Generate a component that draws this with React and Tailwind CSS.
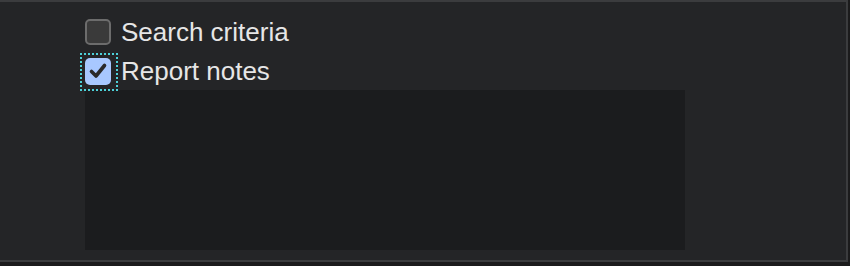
export default function App() {
  return (
    <div className="w-[850px] h-[266px] bg-[#1b1b1c] overflow-hidden" style={{ fontFamily: '"Liberation Sans", Arial, sans-serif' }}>
      <div className="w-[848px] h-[262px] bg-[#242527] border-t-2 border-r-2 border-b-2 border-[#3b3c3e] pl-[85px] pt-[15px]">
        <div className="flex items-center h-[30px] gap-[10px]">
          <div className="w-[26px] h-[26px] rounded-[5px] border-2 border-[#6c6c6c] bg-[#3a3a3a]"></div>
          <span className="text-[26px] leading-none text-[#e6e6e6]">Search criteria</span>
        </div>
        <div className="flex items-center h-[38px] gap-[10px] mt-[5px]">
          <div className="relative w-[26px] h-[27px]">
            <div className="absolute -left-[5px] -top-[5px] w-[38px] h-[38px] border-2 border-dotted border-[#4dd0d8]"></div>
            <div className="w-[26px] h-[27px] rounded-[5px] bg-[#a8c8ff] flex items-center justify-center">
              <svg width="20" height="18" viewBox="0 0 20 18">
                <path d="M3.5 9.5 L8 14 L16.5 3.5" fill="none" stroke="#2a2a2a" strokeWidth="3.6" strokeLinecap="round" strokeLinejoin="round" />
              </svg>
            </div>
          </div>
          <span className="text-[26px] leading-none text-[#e6e6e6]">Report notes</span>
        </div>
        <div className="w-[600px] h-[160px] bg-[#1b1c1e]"></div>
      </div>
    </div>
  );
}
